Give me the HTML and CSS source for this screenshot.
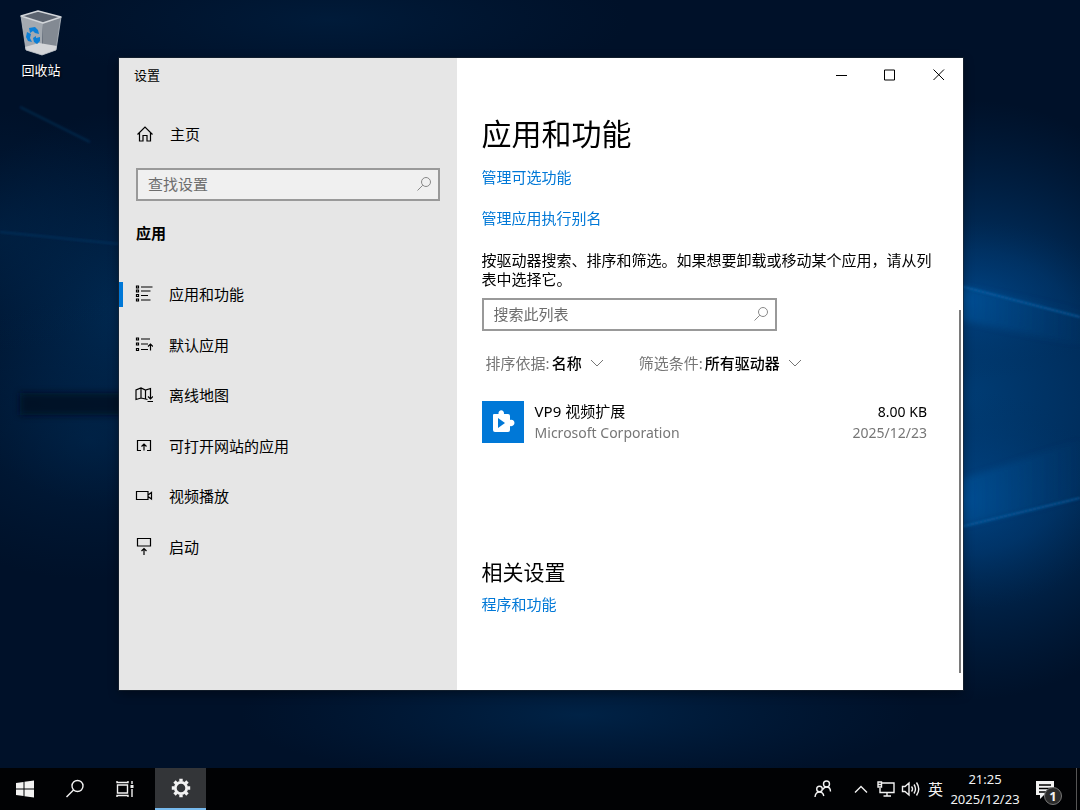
FILE: index.html
```html
<!DOCTYPE html>
<html lang="zh-CN">
<head>
  <meta charset="UTF-8" />
  <meta name="viewport" content="width=device-width, initial-scale=1.0" />
  <title>设置</title>
  <link rel="stylesheet" href="styles.css">
</head>
<body>
  <main class="desktop">
    <!-- wallpaper light beams -->
    <svg class="wallpaper" viewBox="0 0 1080 768" preserveAspectRatio="none" aria-hidden="true">
      <defs>
        <radialGradient id="glow"><stop offset="0" stop-color="#00509a" stop-opacity=".6" /><stop offset=".5" stop-color="#00407e" stop-opacity=".35" /><stop offset="1" stop-color="#00305f" stop-opacity="0" /></radialGradient>
        <radialGradient id="core"><stop offset="0" stop-color="#003c74" /><stop offset=".5" stop-color="#003468" stop-opacity=".8" /><stop offset="1" stop-color="#002a55" stop-opacity="0" /></radialGradient>
        <radialGradient id="haze"><stop offset="0" stop-color="#003260" stop-opacity=".75" /><stop offset="1" stop-color="#002a55" stop-opacity="0" /></radialGradient>
        <linearGradient id="beam"><stop offset="0" stop-color="#0a62b0" stop-opacity=".35" /><stop offset="1" stop-color="#0a5ba0" stop-opacity=".03" /></linearGradient>
        <filter id="soft" x="-20%" y="-50%" width="140%" height="200%"><feGaussianBlur stdDeviation="3" /></filter>
        <filter id="line" x="-5%" y="-5%" width="110%" height="110%"><feGaussianBlur stdDeviation="1" /></filter>
      </defs>
      <rect width="1080" height="768" fill="#001129" />
      <ellipse cx="970" cy="400" rx="260" ry="300" fill="url(#core)" />
      <ellipse cx="965" cy="300" rx="150" ry="80" fill="url(#glow)" />
      <ellipse cx="965" cy="500" rx="150" ry="110" fill="url(#glow)" />
      <ellipse cx="130" cy="310" rx="210" ry="200" fill="url(#haze)" />
      <ellipse cx="90" cy="440" rx="200" ry="140" fill="url(#haze)" opacity=".5" />
      <ellipse cx="0" cy="230" rx="150" ry="120" fill="url(#haze)" opacity=".4" />
      <ellipse cx="580" cy="715" rx="340" ry="70" fill="url(#haze)" opacity=".7" />
      <ellipse cx="330" cy="20" rx="300" ry="70" fill="url(#haze)" opacity=".4" />
      <g filter="url(#soft)">
        <path d="M960 286 1080 310V345L960 320Z" fill="url(#beam)" />
        <path d="M960 526 1080 498V440L960 480Z" fill="url(#beam)" />
        <path d="M20 393H140V415H20Z" fill="#000c22" opacity=".8" />
      </g>
      <path d="M960 286 1080 317M960 527 1080 498" stroke="#1273bd" stroke-opacity=".5" stroke-width="2" fill="none" filter="url(#line)" />
      <path d="M0 232 119 244M20 107 90 142" stroke="#0c4a80" stroke-opacity=".35" stroke-width="2" fill="none" filter="url(#line)" />
    </svg>

    <a class="shortcut" href="#">
      <svg width="42" height="46" viewBox="0 0 42 46" aria-hidden="true">
        <path d="M1 6 23 13 22 45 6 40Z" fill="#a3a9b0" />
        <path d="M23 13 41 7 36 40 22 45Z" fill="#838a93" />
        <path d="M1 6 18 1 41 7 23 13Z" fill="#5c6470" stroke="#d2d6da" stroke-width="1.4" stroke-linejoin="round" />
        <path d="M5 37 19 33 37 36 36 40 22 45 6 40Z" fill="#d3d5d8" />
        <path d="M1 6 6 40 22 45 36 40 41 7" fill="none" stroke="#b9bfc5" stroke-width=".8" />
        <g fill="#0b7fd6">
          <path d="M9 18 15 17 18 20 19 24 15 23 13 21 10 23Z" />
          <path d="M7 22 11 24 10 28 12 32 8 31 6 27Z" />
          <path d="M13 28 16 26 16 28 20 27 20 31 17 34 14 32Z" />
        </g>
      </svg>
      <span>回收站</span>
    </a>

    <section class="window">
      <aside class="sidebar">
        <div class="titlebar">设置</div>
        <a class="home" href="#">
          <svg width="18" height="18" viewBox="0 0 18 18"><path d="M1.500 9.500 9 2 16.500 9.500M3.500 8V16H7V10.500H11V16H14.500V8" /></svg>
          主页
        </a>
        <div class="search">
          <input type="text" placeholder="查找设置" aria-label="查找设置" />
          <svg width="16" height="16" viewBox="0 0 16 16"><circle cx="10" cy="6" r="4.500" /><path d="M6.800 9.200 1.500 14.500" /></svg>
        </div>
        <h2>应用</h2>
        <nav class="menu">
          <a class="active" href="#">
            <svg width="18" height="18" viewBox="0 0 18 18"><path d="M1.500 1h2v2h-2zM1.500 5h2v2h-2zM1.500 9.500h2v2h-2zM1.500 14h2v2h-2zM6 2H17.500M6 6H15.500M6 10.500H13M6 15H15.500" /></svg>
            应用和功能
          </a>
          <a href="#">
            <svg width="18" height="18" viewBox="0 0 18 18"><path d="M1.500 2h2v2h-2zM1.500 7h2v2h-2zM1.500 12.500h2v2h-2zM6 3H15M6 8H13M6 13.500H13M15.500 14.500V8M13 10.500 15.500 8 18 10.500" /></svg>
            默认应用
          </a>
          <a href="#">
            <svg width="18" height="18" viewBox="0 0 18 18"><path d="M12.500 13.500 10.500 13 6 12 1 13.500V4L6 2 10.500 4 15.500 2.500V13M6 2V12M10.500 4V13M13 10.500 15.500 13 18 10.500M12.500 15.500H18" /></svg>
            离线地图
          </a>
          <a href="#">
            <svg width="18" height="18" viewBox="0 0 18 18"><path d="M6 13.500H2.500V3.500H15.500V13.500H12M9 13.500V7M6.500 9.500 9 7 11.500 9.500" /></svg>
            可打开网站的应用
          </a>
          <a href="#">
            <svg width="18" height="18" viewBox="0 0 18 18"><path d="M1.500 4.500H13V12.500H1.500zM13 8 16.500 5.500V12L13 9.500" /></svg>
            视频播放
          </a>
          <a href="#">
            <svg width="18" height="18" viewBox="0 0 18 18"><path d="M2.500 .500H15.500V8H2.500zM9 17V10.500M6.500 13 9 10.500 11.500 13" /></svg>
            启动
          </a>
        </nav>
      </aside>

      <div class="content">
        <div class="controls">
          <button aria-label="最小化"><svg width="12" height="12" viewBox="0 0 12 12"><path d="M1 6.500H12" /></svg></button>
          <button aria-label="最大化"><svg width="12" height="12" viewBox="0 0 12 12"><path d="M.500 1H10.500V11H.500Z" /></svg></button>
          <button aria-label="关闭"><svg width="12" height="12" viewBox="0 0 12 12"><path d="M.500 .500 11 11M11 .500 .500 11" /></svg></button>
        </div>
        <div class="page">
          <h1>应用和功能</h1>
          <a class="link" href="#">管理可选功能</a>
          <a class="link alias" href="#">管理应用执行别名</a>
          <p>按驱动器搜索、排序和筛选。如果想要卸载或移动某个应用，请从列表中选择它。</p>
          <div class="search list-search">
            <input type="text" placeholder="搜索此列表" aria-label="搜索此列表" />
            <svg width="16" height="16" viewBox="0 0 16 16"><circle cx="10" cy="6" r="4.500" /><path d="M6.800 9.200 1.500 14.500" /></svg>
          </div>
          <div class="filters">
            <div class="filter">
              <label for="sort">排序依据:</label>
              <select id="sort"><option>名称</option></select>
              <svg width="14" height="8" viewBox="0 0 14 8"><path d="M1 1 7 7 13 1" /></svg>
            </div>
            <div class="filter">
              <label for="drive">筛选条件:</label>
              <select id="drive"><option>所有驱动器</option></select>
              <svg width="14" height="8" viewBox="0 0 14 8"><path d="M1 1 7 7 13 1" /></svg>
            </div>
          </div>
          <div class="app">
            <svg class="app-icon" width="42" height="42" viewBox="0 0 42 42" aria-hidden="true">
              <rect width="42" height="42" fill="#0078d7" />
              <path d="M12 13H16.500C16 8 22.500 8 22 13H26Q28 13 28 15V19C34 17.500 34 26.500 28 25V29Q28 31 26 31H13Q11 31 11 29V14Q11 13 12 13Z" fill="#fff" />
              <path d="M16 17 23 22 16 27Z" fill="#0078d7" />
            </svg>
            <div class="app-name">VP9 视频扩展<small>Microsoft Corporation</small></div>
            <div class="app-size">8.00 KB<small>2025/12/23</small></div>
          </div>
          <h3>相关设置</h3>
          <a class="link" href="#">程序和功能</a>
        </div>
        <div class="scroll-thumb"></div>
      </div>
    </section>
  </main>

  <footer class="taskbar">
    <button aria-label="开始"><svg width="18" height="18" viewBox="0 0 18 18"><path class="solid" d="M0 3 7.500 2V8.500H0ZM8.500 1.800 18 .500V8.500H8.500ZM0 9.500H7.500V16L0 15ZM8.500 9.500H18V17.500L8.500 16.200Z" /></svg></button>
    <button aria-label="搜索"><svg width="20" height="20" viewBox="0 0 20 20"><circle cx="12.500" cy="7" r="5.500" /><path d="M8.500 11 1.500 18" /></svg></button>
    <button aria-label="任务视图"><svg width="18" height="18" viewBox="0 0 18 18"><path d="M1.500 5H11.500V13H1.500ZM1 1V2.500H12V1M1 17V15.500H12V17M16 1V4M16 9V17" /><path class="solid" d="M14.500 5H17.500V8H14.500Z" /></svg></button>
    <button class="running" aria-label="设置">
      <svg width="20" height="20" viewBox="0 0 20 20"><circle cx="10" cy="10" r="5.700" stroke-width="2.800" /><g stroke-width="3.400"><path d="M10 3.500V.800M10 16.500V19.200M3.500 10H.800M16.500 10H19.200M5.400 5.400 3.500 3.500M14.600 14.600 16.500 16.500M14.600 5.400 16.500 3.500M5.400 14.600 3.500 16.500" /></g></svg>
    </button>

    <div class="tray">
      <button class="people" aria-label="人脉"><svg width="18" height="18" viewBox="0 0 18 18"><circle cx="12.500" cy="4" r="3" /><circle cx="5.500" cy="9" r="2.800" /><path d="M1 17Q1.500 12 5.500 12Q9 12 9.800 16M9 9.500Q10 7 12.500 7Q16.500 7 16.500 11.500" /></svg></button>
      <button aria-label="显示隐藏的图标"><svg width="14" height="8" viewBox="0 0 14 8"><path d="M1 7.500 7 1.500 13 7.500" /></svg></button>
      <button aria-label="网络"><svg width="20" height="18" viewBox="0 0 20 18"><path d="M6 3H18V12.500H4V8M11 12.500V16M7.500 16H15M2 2H5.500V7H2ZM2 4.500H5.500" /></svg></button>
      <button aria-label="音量"><svg width="20" height="18" viewBox="0 0 20 18"><path d="M1.500 6.500H4L8 3V15L4 11.500H1.500ZM10.500 6.500Q12.500 9 10.500 11.500M13 4.500Q16 9 13 13.500M15.500 2.500Q20 9 15.500 15.500" /></svg></button>
      <button aria-label="输入法">英</button>
      <button class="clock">21:25<br>2025/12/23</button>
      <button class="notice" aria-label="通知">
        <svg width="18" height="19" viewBox="0 0 18 19"><path class="solid" d="M0 1H18V15H8L4 19V15H0Z" /><path d="M3 5H15M3 8.500H15M3 12H10" stroke="#000" stroke-width="1.400" /></svg>
        <span class="badge">1</span>
      </button>
    </div>
  </footer>
</body>
</html>
```

FILE: styles.css
```css
* {
  box-sizing: border-box;
}
body {
  margin: 0;
  min-height: 100vh;
  display: flex;
  flex-direction: column;
  font-family: "Noto Sans", "Noto Sans CJK SC", sans-serif;
  font-size: 15px;
  line-height: 20px;
  color: #000;
  background: #001129;
}
a {
  color: inherit;
  text-decoration: none;
}
button, input, select {
  font: inherit;
  color: inherit;
  background: none;
  border: none;
  padding: 0;
  margin: 0;
}
svg {
  display: block;
  flex: none;
  fill: none;
  stroke: currentColor;
}
h1, h2, h3, p {
  margin: 0;
  font-weight: normal;
}

/* desktop */
.desktop {
  flex: 1;
  display: flex;
  position: relative;
}
.wallpaper {
  position: absolute;
  inset: 0;
  width: 100%;
  height: 100%;
  stroke: none;
}
.shortcut {
  position: relative;
  width: 82px;
  padding-top: 10px;
  display: flex;
  flex-direction: column;
  align-items: center;
  align-self: flex-start;
  gap: 4px;
  font-size: 13px;
  color: #fff;
  text-shadow: 1px 1px 2px #000;
}
.shortcut svg {
  stroke: none;
}

/* settings window */
.window {
  position: relative;
  flex: 1;
  display: flex;
  margin: 58px 117px 78px 37px;
  background: #fff;
  box-shadow: 0 0 0 1px rgba(30, 40, 50, 0.6), 0 3px 10px rgba(0, 0, 0, 0.4);
}
.sidebar {
  flex: 0 0 40%;
  background: #e6e6e6;
}
.titlebar {
  height: 34px;
  padding-left: 15px;
  font-size: 13px;
  line-height: 34px;
}
.home {
  display: flex;
  align-items: center;
  gap: 16px;
  height: 50px;
  margin-top: 17px;
  padding-left: 17px;
}
.search {
  display: flex;
  align-items: center;
  height: 33px;
  border: 2px solid #999;
  padding: 0 6px 2px 10px;
  color: #888;
}
.sidebar .search {
  margin: 9px 17px 0 17px;
  background: #f0f0f0;
}
.search input {
  flex: 1;
  min-width: 0;
  color: #000;
  outline: none;
}
.search input::placeholder {
  color: #6d6d6d;
  opacity: 1;
}
.sidebar h2 {
  margin-top: 17px;
  padding-left: 17px;
  font-size: 15px;
  font-weight: bold;
  line-height: 30px;
}
.menu {
  display: grid;
  grid-auto-rows: 1fr;
  min-height: 303px;
  margin-top: 21px;
}
.menu a {
  display: flex;
  align-items: center;
  gap: 16px;
  padding-left: 16px;
  position: relative;
}
.sidebar a svg {
  stroke-width: 1.2;
}
.menu .active::before {
  content: "";
  position: absolute;
  left: 0;
  width: 4px;
  height: 25px;
  background: #0078d7;
}

/* page */
.content {
  flex: 1;
  position: relative;
}
.controls {
  display: flex;
  justify-content: flex-end;
}
.controls button {
  width: 49px;
  height: 34px;
  display: grid;
  place-items: center;
}
.page {
  display: flex;
  flex-direction: column;
  align-items: flex-start;
  padding: 22px 36px 22px 25px;
}
h1 {
  font-size: 30px;
  line-height: 40px;
}
.link {
  margin-top: 13px;
  color: #0078d7;
}
.alias {
  margin-top: 21px;
}
.page p {
  margin-top: 23px;
  margin-right: -8px;
  line-height: 19px;
}
.list-search {
  width: 100%;
  max-width: 295px;
  margin-top: 9px;
}
.filters {
  display: flex;
  gap: 35px;
  margin-top: 22px;
  padding-left: 4px;
}
.filter {
  display: flex;
  align-items: center;
  color: #767676;
}
.filter select {
  appearance: none;
  margin: 0 7px 0 2px;
  color: #000;
  font-weight: 500;
}
.app {
  display: flex;
  gap: 11px;
  width: 100%;
  margin-top: 28px;
  line-height: 21px;
}
.app-icon {
  stroke: none;
}
.app-name {
  flex: 1;
}
.app-size {
  font-size: 14px;
  text-align: right;
}
.app small {
  display: block;
  font-size: 14px;
  color: #767676;
}
h3 {
  margin-top: 115px;
  font-size: 21px;
  line-height: 28px;
}
h3 + .link {
  margin-top: 8px;
}
.scroll-thumb {
  position: absolute;
  top: 252px;
  right: 2px;
  bottom: 17px;
  width: 2px;
  background: #7a7a7a;
}

/* taskbar */
.taskbar {
  position: relative;
  display: flex;
  height: 42px;
  background: #010204;
  color: #f2f2f2;
}
.taskbar button {
  display: grid;
  place-items: center;
  width: 50px;
}
.taskbar svg {
  stroke-width: 1.4;
}
.taskbar .solid {
  fill: currentColor;
  stroke: none;
}
.taskbar .running {
  width: 51px;
  margin-left: 5px;
  background: #333538;
  border-bottom: 2px solid #76b9ed;
}
.tray {
  display: flex;
  margin-left: auto;
  margin-right: 3px;
  border-right: 1px solid #555;
}
.taskbar .tray button {
  width: 25px;
}
.taskbar .tray .people {
  margin-right: 13px;
}
.taskbar .tray .clock {
  display: block;
  width: 74px;
  font-size: 13px;
  line-height: 20px;
  white-space: nowrap;
}
.taskbar .tray .notice {
  position: relative;
  width: 54px;
  padding-right: 8px;
}
.badge {
  position: absolute;
  left: 22px;
  top: 19px;
  width: 18px;
  height: 18px;
  border: 1px solid #777;
  border-radius: 50%;
  background: #2b2b2b;
  font-size: 13px;
  font-weight: bold;
  line-height: 16px;
  text-align: center;
}
```
